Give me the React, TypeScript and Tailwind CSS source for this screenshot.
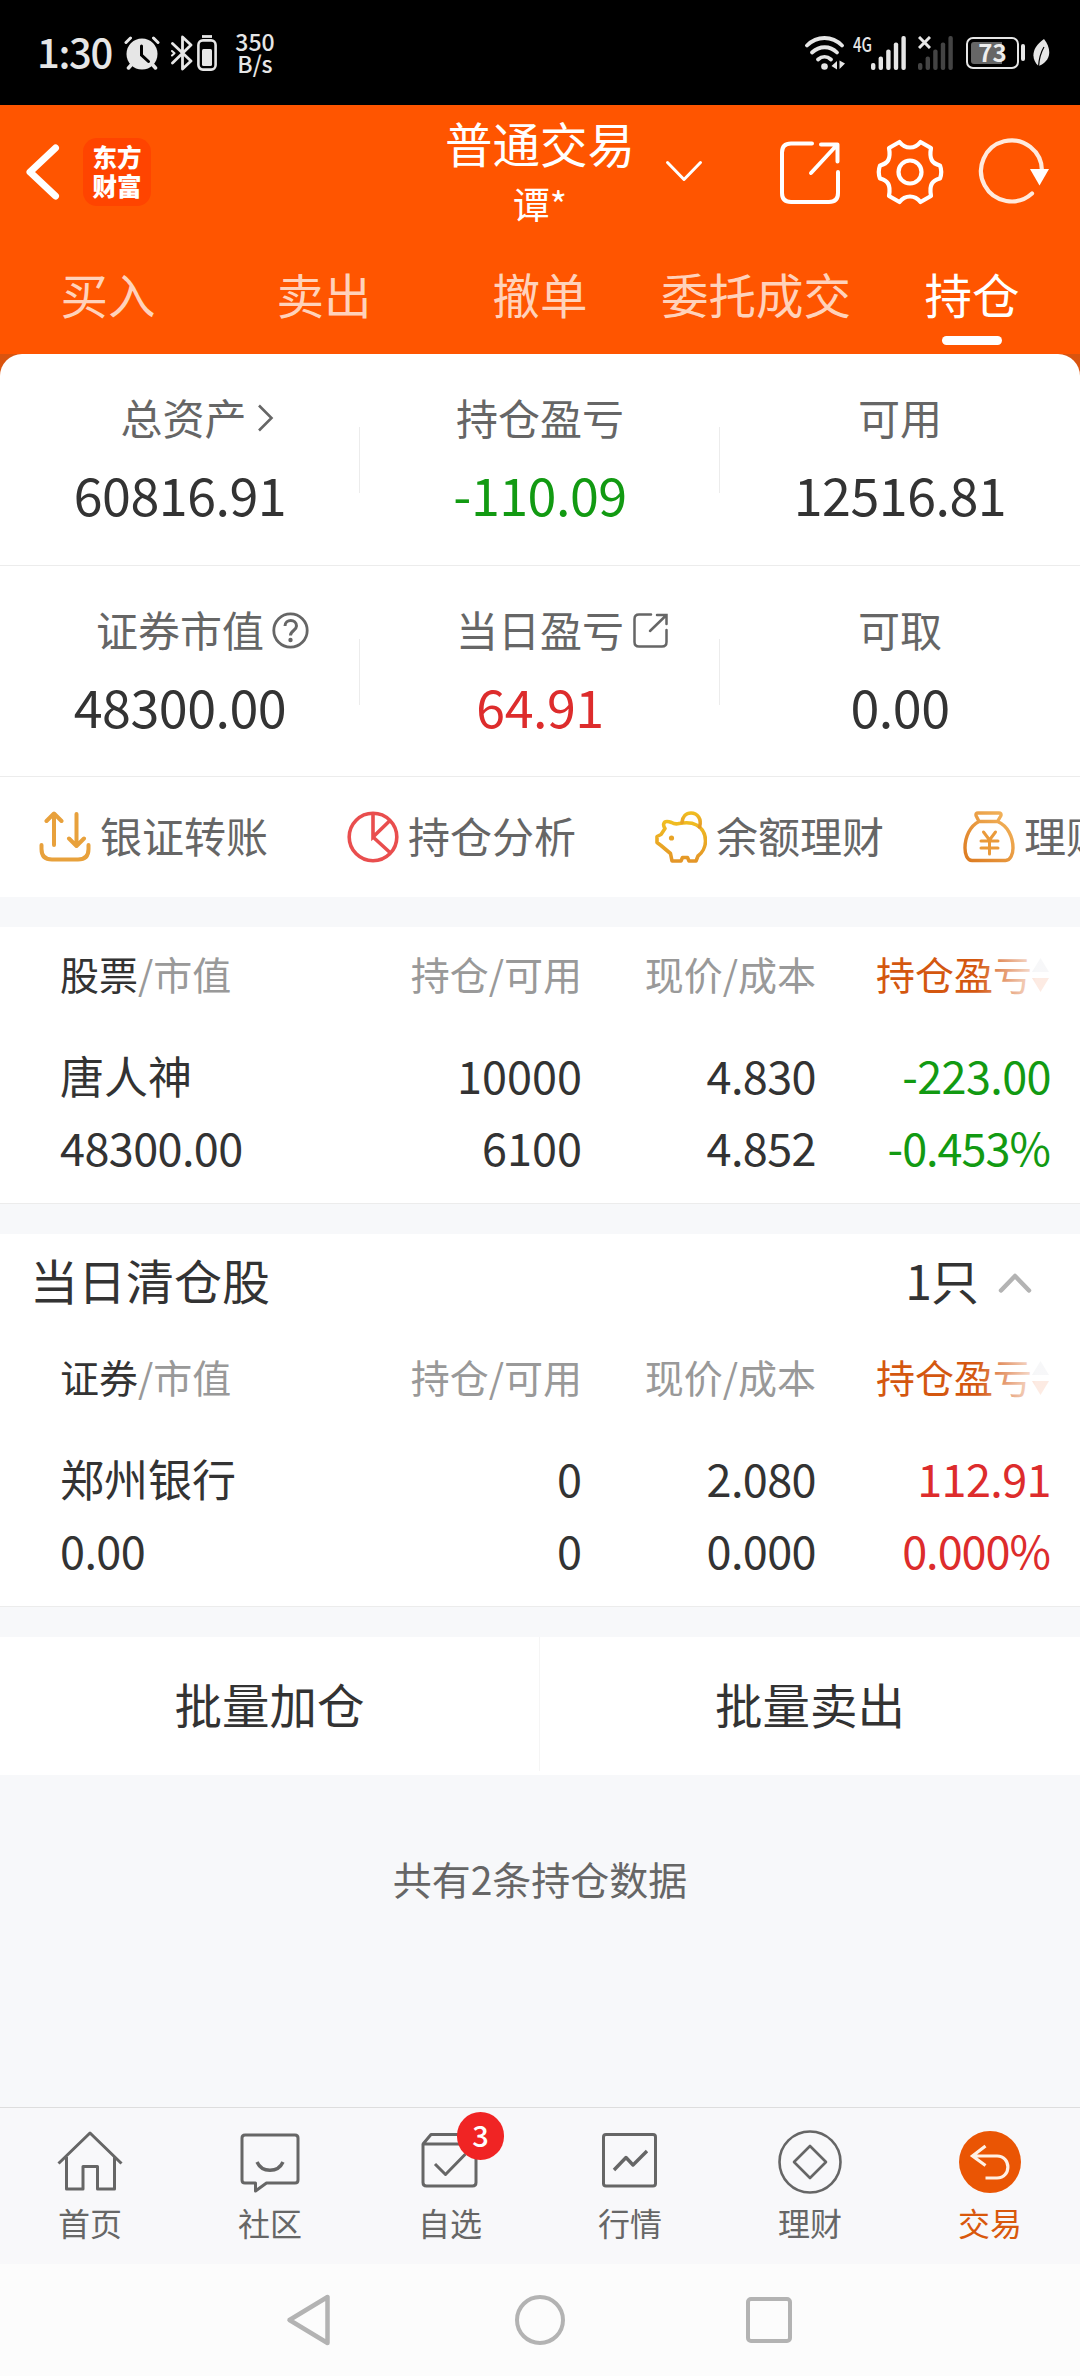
import clsx from "clsx"
import type { ReactNode } from "react"

type Tone = "up" | "down" | "flat"

type Metric = {
  label: string
  value: string
  tone?: Tone
  icon?: ReactNode
}

type Holding = {
  name: string
  marketValue: string
  amount: string
  available: string
  price: string
  cost: string
  profit: string
  profitRate: string
  tone: Tone
}

const toneClass: Record<Tone, string> = {
  up: "text-[#dd2c2c]",
  down: "text-[#129a12]",
  flat: "text-[#333333]",
}

const tabs = ["买入", "卖出", "撤单", "委托成交", "持仓"]

const holdings: Holding[] = [
  {
    name: "唐人神",
    marketValue: "48300.00",
    amount: "10000",
    available: "6100",
    price: "4.830",
    cost: "4.852",
    profit: "-223.00",
    profitRate: "-0.453%",
    tone: "down",
  },
]

const cleared: Holding[] = [
  {
    name: "郑州银行",
    marketValue: "0.00",
    amount: "0",
    available: "0",
    price: "2.080",
    cost: "0.000",
    profit: "112.91",
    profitRate: "0.000%",
    tone: "up",
  },
]

const SignalBars = ({ color }: { color: string }) => (
  <svg width="35" height="34" viewBox="0 0 35 34" fill={color}>
    <rect x="0" y="27" width="4.4" height="7" rx="2" />
    <rect x="7.6" y="20.5" width="4.4" height="13.5" rx="2" />
    <rect x="15.2" y="13.5" width="4.4" height="20.5" rx="2" />
    <rect x="22.8" y="6.5" width="4.4" height="27.5" rx="2" />
    <rect x="30.4" y="0" width="4.4" height="34" rx="2" />
  </svg>
)

const StatusBar = () => (
  <div className="flex h-[105px] items-center justify-between bg-black pr-[30px] pl-[37px] text-[#e6e6e6]">
    <div className="flex items-center">
      <span className="-mt-[4px] w-[87px] text-[40px] leading-none font-medium tracking-[-1.3px]">1:30</span>
      <svg width="36" height="34" viewBox="0 0 36 34" fill="none">
        <circle cx="18" cy="18" r="15.5" fill="#e6e6e6" />
        <path d="M2 6.5 6.5 2M34 6.5 29.5 2" stroke="#e6e6e6" strokeWidth="3" strokeLinecap="round" />
        <path d="m8 28-3.5 4M28 28l3.5 4" stroke="#e6e6e6" strokeWidth="3.5" strokeLinecap="round" />
        <path d="M17.5 10v9l7 6.5" stroke="#000" strokeWidth="3" strokeLinecap="round" />
      </svg>
      <svg className="ml-[11px]" width="22" height="36" viewBox="0 0 22 36" fill="none" stroke="#e6e6e6" strokeWidth="2.8" strokeLinejoin="round" strokeLinecap="round">
        <path d="M1.5 8.5 20 26l-8.500 8V2L20 10 1.5 28" />
        <path d="m1 16 2.500 2.200L1 20.500" strokeWidth="2" />
      </svg>
      <svg className="ml-[4px]" width="20" height="36" viewBox="0 0 20 36" fill="none">
        <path d="M5 1.500h10" stroke="#e6e6e6" strokeWidth="2.8" />
        <rect x="1.4" y="5.4" width="17.2" height="29.2" rx="4.5" stroke="#e6e6e6" strokeWidth="2.6" />
        <rect x="5" y="14" width="10" height="17" rx="1.5" fill="#e6e6e6" />
      </svg>
      <span className="ml-[18px] flex w-10 flex-col items-center text-[23px] leading-[21.5px] font-medium">
        <span>350</span>
        <span>B/s</span>
      </span>
    </div>
    <div className="flex items-center">
      <svg width="40" height="34" viewBox="0 0 40 34" fill="none" stroke="#e6e6e6" strokeWidth="3.8" strokeLinecap="round">
        <path d="M2 9.500c10-10 25-10 35 0" />
        <path d="M7 16.500c7.500-7 18-7 25 0" />
        <path d="M13 23.500c4-3.600 9-3.600 13 0" />
        <circle cx="19.5" cy="30.5" r="3.3" fill="#e6e6e6" stroke="none" />
        <path d="M32 25v8.500L26.500 30zM34.500 24.500V33l5.500-5.500z" fill="#e6e6e6" stroke="none" />
      </svg>
      <span className="-mt-[17px] ml-[8px] w-[18px] origin-left scale-x-75 text-[20px] leading-none font-medium">4G</span>
      <SignalBars color="#e6e6e6" />
      <div className="relative ml-[12px]">
        <SignalBars color="#444444" />
        <svg className="absolute top-0 left-0" width="13" height="13" viewBox="0 0 13 13" stroke="#e6e6e6" strokeWidth="3">
          <path d="m1 1 11 11M12 1 1 12" />
        </svg>
      </div>
      <div className="ml-[13px] flex h-8 w-[53px] rounded-[7px] border-[2.5px] border-[#e6e6e6] p-[3px]">
        <div className="flex flex-1 items-center justify-center rounded-[3px] bg-linear-to-r from-[#666666] from-73% to-black to-73%">
          <span className="-mt-[2px] text-[24px] leading-none font-bold text-[#eeeeee]">73</span>
        </div>
      </div>
      <span className="ml-[2px] h-[17px] w-[4px] rounded-full bg-[#e6e6e6]" />
      <svg className="ml-[8px]" width="17" height="28" viewBox="0 0 17 28">
        <path d="M11 0c7 9 8 20-3 26l-2.500 1C-2 20-2 9 11 0" fill="#e6e6e6" />
        <path d="M11 8C8 13 6 19 5.5 28" stroke="#000" strokeWidth="1.2" fill="none" />
      </svg>
    </div>
  </div>
)

const Header = () => (
  <header className="flex h-[249px] flex-col bg-[#ff5500] text-white">
    <div className="flex h-[138px] items-start">
      <div className="flex w-[442px] items-center pt-[33px] pl-[26px]">
        <svg width="34" height="56" viewBox="0 0 34 56" fill="none" stroke="#fff" strokeWidth="7" strokeLinecap="round" strokeLinejoin="round">
          <path d="M29.5 4 4 28l25.500 24" />
        </svg>
        <div className="ml-[23px] flex h-[68px] w-[68px] flex-col items-center justify-center rounded-[14px] bg-[#ff4400] pb-[3px] text-[24.5px] leading-[29px] font-black text-white">
          <span>东方</span>
          <span>财富</span>
        </div>
      </div>
      <div className="flex w-[196px] flex-col items-center pt-[10px]">
        <span className="text-[47.5px] leading-[56px]">普通交易</span>
        <span className="mt-[10px] text-[37px] leading-[44px]">谭*</span>
      </div>
      <svg className="mt-[55px] ml-[27px]" width="38" height="23" viewBox="0 0 38 23" fill="none" stroke="#fff" strokeWidth="3" strokeLinecap="round" strokeLinejoin="round">
        <path d="m2.500 2.500 16.500 17 16.500-17" />
      </svg>
      <svg className="mt-[35px] ml-[76px]" width="62" height="65" viewBox="0 0 62 65" fill="none" stroke="#fff" strokeWidth="4" strokeLinecap="round" strokeLinejoin="round">
        <path d="M33 3.500H12Q3 3.500 3 12.500V53q0 9 9 9h38q9 0 9-9V32" />
        <path d="M42 4.500h16.500v17M57 6 32 33" />
      </svg>
      <svg className="mt-[32px] ml-[34px]" width="70" height="70" viewBox="0 0 70 70" fill="none" stroke="#fff" strokeWidth="4.2" strokeLinejoin="round">
        <path d="M24.5 5C28 9.500 31 10.500 35 10.500S42 9.500 45.500 5L56 11C54 22 57 26.500 65 28.500Q67.500 35 65 41.500C57 43.500 54 48 56 59L45.500 65C42 60.500 39 59.500 35 59.500S28 60.500 24.500 65L14 59C16 48 13 43.500 5 41.500Q2.500 35 5 28.500C13 26.500 16 22 14 11z" />
        <circle cx="35" cy="35" r="11.5" />
      </svg>
      <svg className="mt-[33px] ml-[33px]" width="74" height="68" viewBox="0 0 74 68" fill="none">
        <path d="M64 33A30.5 30.5 0 1 0 54 55.500" stroke="#ffeadd" strokeWidth="4.2" strokeLinecap="round" />
        <path d="M52 31h19L61.500 47.500z" fill="#fff" />
      </svg>
    </div>
    <nav className="grid h-[111px] grid-cols-5">
      {tabs.map((t) => {
        const active = t === "持仓"
        return (
          <div key={t} className="flex flex-col items-center pt-[21px]">
            <span className={clsx("text-[47.5px] leading-[60px] whitespace-nowrap", active ? "text-white" : "text-[#ffd2bb]")}>{t}</span>
            {active ? <span className="mt-[12px] h-[9px] w-[60px] rounded-full bg-white" /> : null}
          </div>
        )
      })}
    </nav>
  </header>
)

const metrics: Metric[] = [
  {
    label: "总资产",
    value: "60816.91",
    icon: (
      <svg className="absolute top-[14px] left-[137px]" width="17" height="28" viewBox="0 0 17 28" fill="none" stroke="#666" strokeWidth="2.6">
        <path d="m2 1.500 12.500 12.500L2 26.500" />
      </svg>
    ),
  },
  { label: "持仓盈亏", value: "-110.09", tone: "down" },
  { label: "可用", value: "12516.81" },
  {
    label: "证券市值",
    value: "48300.00",
    icon: (
      <svg className="absolute top-[10px] left-[176px]" width="37" height="37" viewBox="0 0 37 37" fill="none" stroke="#666" strokeWidth="2.8">
        <circle cx="18.5" cy="18.5" r="16.7" />
        <path d="M13 14c0-7.500 11.500-7.500 11.500 0 0 4.500-6 4.500-6 9.500" strokeWidth="3" />
        <circle cx="18.5" cy="28" r="2.2" fill="#666" stroke="none" />
      </svg>
    ),
  },
  {
    label: "当日盈亏",
    value: "64.91",
    tone: "up",
    icon: (
      <svg className="absolute top-[11px] left-[177px]" width="35" height="35" viewBox="0 0 35 35" fill="none" stroke="#666" strokeWidth="2.5" strokeLinecap="round">
        <path d="M18 1.500H6Q1.500 1.500 1.500 6v23q0 4.500 4.500 4.500h23q4.500 0 4.500-4.500V17" />
        <path d="M24 2h9.500v9M33 2.500 17 18" />
      </svg>
    ),
  },
  { label: "可取", value: "0.00" },
]

const MetricCell = ({ metric, divider }: { metric: Metric; divider: boolean }) => (
  <div className="relative flex h-[211px] flex-col items-center pt-[36px]">
    <span className={clsx("relative text-[42px] leading-[54px] text-[#666666]", metric.label === "总资产" && "ml-[7px]")}>
      {metric.label}
      {metric.icon}
    </span>
    <span className={clsx("mt-[19px] text-[52px] leading-[62px] tracking-[-0.5px]", toneClass[metric.tone ?? "flat"])}>{metric.value}</span>
    {divider ? <span className="absolute top-[73px] right-0 h-[66px] w-px bg-[#ececec]" /> : null}
  </div>
)

const Summary = () => (
  <div className="bg-linear-to-b from-[#d9540f] from-15px to-[#ff5500] to-15px">
    <section className="rounded-t-[22px] bg-white">
      <div className="grid h-[212px] grid-cols-3 border-b border-[#ececec]">
        {metrics.slice(0, 3).map((m, i) => (
          <MetricCell key={m.label} metric={m} divider={i < 2} />
        ))}
      </div>
      <div className="grid h-[211px] grid-cols-3 border-b border-[#ececec]">
        {metrics.slice(3).map((m, i) => (
          <MetricCell key={m.label} metric={m} divider={i < 2} />
        ))}
      </div>
    </section>
  </div>
)

const TransferIcon = () => (
  <svg width="52" height="52" viewBox="0 0 52 52" fill="none" stroke="#e8a13c" strokeWidth="4" strokeLinecap="round" strokeLinejoin="round">
    <path d="M2.500 34v4q0 10.500 10.500 10.500h26q10.500 0 10.500-10.500v-4" />
    <path d="M15 34V3M7.500 10 15 2.500 22.500 10M37.500 3v31M30 27.500l7.500 7.500 7.500-7.500" />
  </svg>
)

const AnalysisIcon = () => (
  <svg width="52" height="52" viewBox="0 0 52 52" fill="none" stroke="#e94e4e" strokeWidth="3.6">
    <circle cx="26" cy="26" r="23.8" />
    <path d="M26 2v24l17-16.500M26 26l17.500 16" />
  </svg>
)

const PiggyIcon = () => (
  <svg width="52" height="52" viewBox="0 0 52 52" fill="none" stroke="url(#piggy)" strokeWidth="3.6" strokeLinecap="round" strokeLinejoin="round">
    <defs>
      <linearGradient id="piggy" x1="0" y1="0" x2="0" y2="1">
        <stop offset="0" stopColor="#f0bd20" />
        <stop offset="1" stopColor="#e49628" />
      </linearGradient>
    </defs>
    <path d="M10 17.500C7.500 14 8.500 10.500 12 10.500q2 0 4.500 1 3.500 2 7.500 1c6-1 13-1 17.500 1.500C47 17 50.500 22.500 50.500 30c0 6-3.500 12-7.500 15l-2 5h-7l-1.500-3.500h-5L26 50h-9l-1.500-7.500L6 34.500l-4-3V25.500L6 23.500z" />
    <path d="M27 11.500C27.500 5.500 31 2 36 2c6.500 0 11 6 8.500 14" />
    <circle cx="16.5" cy="27" r="2.6" fill="#e8a326" stroke="none" />
  </svg>
)

const MoneyBagIcon = () => (
  <svg width="52" height="52" viewBox="0 0 52 52" fill="none" stroke="url(#bag)" strokeWidth="3.4" strokeLinecap="round" strokeLinejoin="round">
    <defs>
      <linearGradient id="bag" x1="1" y1="0" x2="0" y2="1">
        <stop offset="0" stopColor="#f4b860" />
        <stop offset="1" stopColor="#dc7a20" />
      </linearGradient>
    </defs>
    <path d="M16 10.500 13 4.500q-.5-2.500 2-2.500h21q2.500 0 2 2.500l-3.500 6zC7 15 2 26 2 37c0 6 2 12.500 7 12.500h33.500c5 0 7.500-6.500 7.500-12.500C50 26 45 15 34.500 10.500" />
    <path d="m20.500 21 6 8 6-8M18 30h17M18 37h17M26.500 29v14" stroke="#ea9a3a" strokeWidth="3" />
  </svg>
)

const shortcuts = [
  { label: "银证转账", icon: <TransferIcon /> },
  { label: "持仓分析", icon: <AnalysisIcon /> },
  { label: "余额理财", icon: <PiggyIcon /> },
  { label: "理财产品", icon: <MoneyBagIcon /> },
]

const Shortcuts = () => (
  <div className="flex h-[120px] items-center gap-[79px] overflow-hidden bg-white pl-[39px]">
    {shortcuts.map((s) => (
      <div key={s.label} className="flex shrink-0 items-center gap-[9px]">
        {s.icon}
        <span className="-mt-[4px] text-[42px] leading-[54px] text-[#666666]">{s.label}</span>
      </div>
    ))}
  </div>
)

const rowGrid = "grid grid-cols-[322px_200px_234px_1fr]"

const TableHead = ({ first }: { first: string }) => (
  <div className={clsx(rowGrid, "h-[50px] items-center pl-[60px] text-[39px] leading-[50px] whitespace-nowrap text-[#999999]")}>
    <span>
      <span className="text-[#333333]">{first}</span>/市值
    </span>
    <span className="text-right">持仓/可用</span>
    <span className="text-right">现价/成本</span>
    {/* the sort column fades out towards the edge */}
    <span className="relative flex items-center pl-[60px]">
      <span className="text-[#d4570f]">持仓盈亏</span>
      <svg className="mt-[3px]" width="17" height="34" viewBox="0 0 17 34">
        <path d="M8.500 0 17 14H0z" fill="#c8ccd4" />
        <path d="M0 20h17L8.500 34z" fill="#f07a45" />
      </svg>
      <span className="absolute inset-y-0 right-[24px] w-[80px] bg-linear-to-r from-white/0 to-white/85 to-75%" />
    </span>
  </div>
)

const HoldingRow = ({ h }: { h: Holding }) => (
  <div className="flex flex-col pl-[60px] text-[45px] leading-[72px] tracking-[-0.6px] text-[#333333]">
    <div className={rowGrid}>
      <span className="text-[44px] tracking-normal">{h.name}</span>
      <span className="text-right tracking-normal">{h.amount}</span>
      <span className="text-right">{h.price}</span>
      <span className={clsx("pr-[29px] text-right", toneClass[h.tone])}>{h.profit}</span>
    </div>
    <div className={rowGrid}>
      <span>{h.marketValue}</span>
      <span className="text-right tracking-normal">{h.available}</span>
      <span className="text-right">{h.cost}</span>
      <span className={clsx("pr-[30px] text-right tracking-[-1px]", toneClass[h.tone])}>{h.profitRate}</span>
    </div>
  </div>
)

const Gap = () => <div className="h-[31px] border-t border-[#ececec] bg-[#f7f8fa]" />

const Positions = () => (
  <section className="h-[276px] bg-white pt-[21px]">
    <TableHead first="股票" />
    <div className="mt-[41px]">
      {holdings.map((h) => (
        <HoldingRow key={h.name} h={h} />
      ))}
    </div>
  </section>
)

const ClearedToday = () => (
  <section className="h-[372px] bg-white">
    <div className="flex h-[98px] items-center pr-[48px] pl-[30px] text-[48px] text-[#333333]">
      <span className="-mt-[8px]">当日清仓股</span>
      <span className="-mt-[8px] ml-auto tracking-[-1px]">1只</span>
      <svg className="ml-[20px]" width="34" height="22" viewBox="0 0 34 22" fill="none" stroke="#b3b3b3" strokeWidth="4.5" strokeLinecap="round" strokeLinejoin="round">
        <path d="M3 18.500 17 4l14 14.500" />
      </svg>
    </div>
    <div className="pt-[19px]">
      <TableHead first="证券" />
    </div>
    <div className="mt-[41px]">
      {cleared.map((h) => (
        <HoldingRow key={h.name} h={h} />
      ))}
    </div>
  </section>
)

const HomeIcon = () => (
  <svg width="66" height="64" viewBox="0 0 66 64" fill="none" stroke="#666" strokeWidth="3" strokeLinejoin="round">
    <path d="M1.500 33.500 33 3l31.500 30.500" />
    <path d="M9.500 27v32h16.500V36.500h14.500V59H57.500V27" />
  </svg>
)

const CommunityIcon = () => (
  <svg width="66" height="64" viewBox="0 0 66 64" fill="none" stroke="#666" strokeWidth="3" strokeLinejoin="round">
    <path d="M8 5h50q3 0 3 3v42q0 3-3 3H29.500L18.500 61v-8H8q-3 0-3-3V8q0-3 3-3z" />
    <path d="M20 32c5 11 21 11 26 0" strokeWidth="3.4" />
  </svg>
)

const WatchlistIcon = () => (
  <svg width="66" height="64" viewBox="0 0 66 64" fill="none" stroke="#666" strokeWidth="3" strokeLinejoin="round">
    <path d="M6 14h53v38.500q0 3.500-3.500 3.500h-46Q6 56 6 52.500zl8-9.500h38L59 14" />
    <path d="m18 34 10.500 10.500L48.500 24" />
  </svg>
)

const MarketIcon = () => (
  <svg width="66" height="64" viewBox="0 0 66 64" fill="none" stroke="#666" strokeWidth="3" strokeLinejoin="round">
    <rect x="6.5" y="4.5" width="52" height="51.5" rx="2.5" />
    <path d="m17 40 12-12.500 7 7.500 14-14" strokeWidth="3.4" />
  </svg>
)

const WealthIcon = () => (
  <svg width="66" height="64" viewBox="0 0 66 64" fill="none" stroke="#666" strokeWidth="2.6" strokeLinejoin="round">
    <circle cx="33" cy="32" r="30.5" />
    <path d="m33 16 16 16-16 16-16-16z" />
  </svg>
)

const TradeIcon = () => (
  <svg width="66" height="64" viewBox="0 0 66 64" fill="none" stroke="#fff0e4" strokeWidth="3.2">
    <circle cx="33" cy="32" r="31" fill="#ea5504" stroke="none" />
    <path d="M15 26h25c14.500 0 14.500 22 0 22H28.500M28.500 16 15.500 26l13 9.500" />
  </svg>
)

const bottomTabs = [
  { label: "首页", icon: <HomeIcon /> },
  { label: "社区", icon: <CommunityIcon /> },
  { label: "自选", icon: <WatchlistIcon />, badge: 3 },
  { label: "行情", icon: <MarketIcon /> },
  { label: "理财", icon: <WealthIcon /> },
  { label: "交易", icon: <TradeIcon />, active: true },
]

const BottomTabs = () => (
  <nav className="grid h-[157px] grid-cols-6 border-t border-[#dddddd] bg-[#f8f8fa]">
    {bottomTabs.map((t) => (
      <div key={t.label} className="flex flex-col items-center pt-[22px]">
        <div className="relative">
          {t.icon}
          {t.badge ? (
            <span className="absolute -top-[18px] left-[40px] flex h-[48px] w-[47px] items-center justify-center rounded-full bg-[#f02424] pb-[3px] text-[29px] leading-none font-medium text-white">
              {t.badge}
            </span>
          ) : null}
        </div>
        <span className={clsx("mt-[7px] text-[32px] leading-[42px]", t.active ? "text-[#d9580c]" : "text-[#666666]")}>{t.label}</span>
      </div>
    ))}
  </nav>
)

const SystemNav = () => (
  <div className="flex h-[112px] items-center bg-[#fcfcfc] pl-[286px]">
    <svg width="46" height="54" viewBox="0 0 46 54" fill="none" stroke="#b3b3b3" strokeWidth="4.5" strokeLinejoin="round">
      <path d="M41.500 4v46L3.500 27z" />
    </svg>
    <span className="ml-[183px] h-[50px] w-[50px] rounded-full border-[4.5px] border-[#b3b3b3]" />
    <span className="ml-[181px] h-[46px] w-[46px] rounded-[5px] border-[4.5px] border-[#b3b3b3]" />
  </div>
)

export default function App() {
  return (
    <div className="flex h-[2376px] w-[1080px] flex-col overflow-hidden bg-[#f7f8fa] font-['Noto_Sans_CJK_SC',sans-serif]">
      <StatusBar />
      <Header />
      <Summary />
      <Shortcuts />
      <div className="h-[30px] bg-[#f7f8fa]" />
      <Positions />
      <Gap />
      <ClearedToday />
      <Gap />
      <div className="grid h-[138px] grid-cols-2 bg-white pb-[4px] text-[47.5px] text-[#333333]">
        <span className="flex items-center justify-center border-r border-[#f5f5f5]">批量加仓</span>
        <span className="flex items-center justify-center">批量卖出</span>
      </div>
      <p className="flex-1 pt-[78px] text-center text-[39px] leading-[50px] text-[#666666]">共有2条持仓数据</p>
      <BottomTabs />
      <SystemNav />
    </div>
  )
}
